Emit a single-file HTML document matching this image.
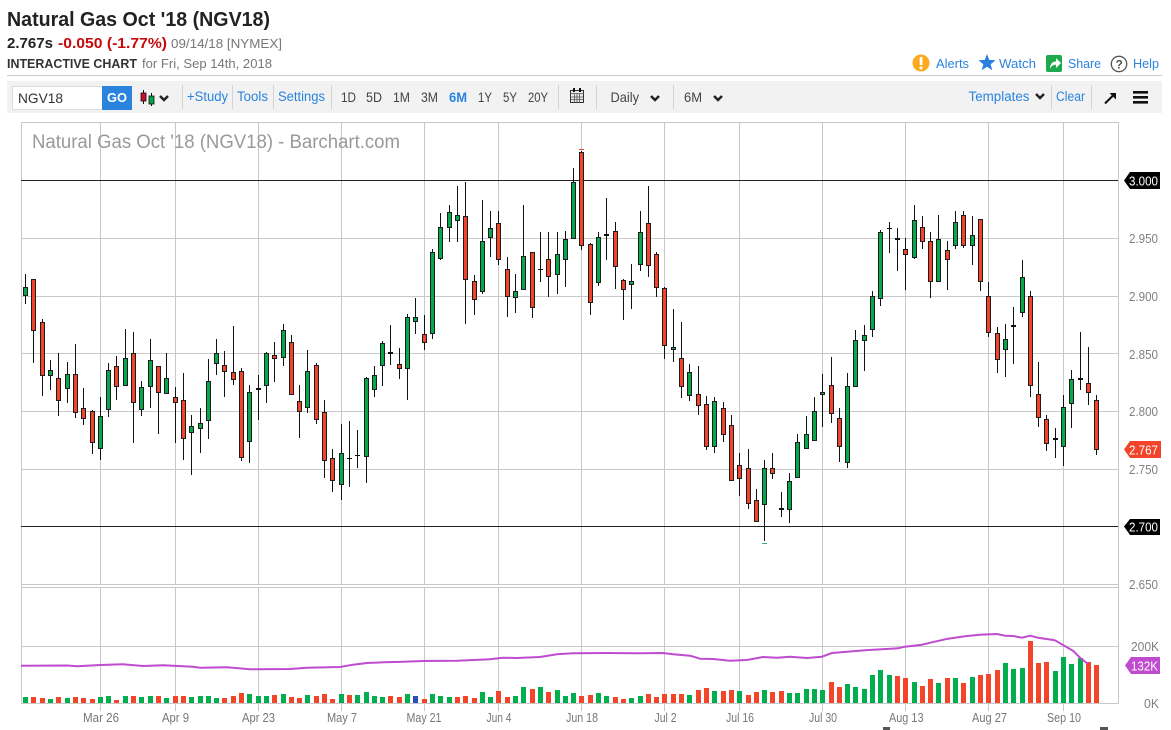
<!DOCTYPE html>
<html lang="en"><head><meta charset="utf-8"><title>Natural Gas Oct '18 (NGV18)</title>
<style>html,body{margin:0;padding:0;background:#fff;overflow:hidden}svg{display:block}text{font-family:"Liberation Sans",sans-serif}</style></head>
<body>
<svg xmlns="http://www.w3.org/2000/svg" width="1171" height="730" viewBox="0 0 1171 730">
<rect width="1171" height="730" fill="#fff"/>
<!-- header -->
<text x="7" y="26" font-size="20" font-weight="bold" fill="#222" textLength="263" lengthAdjust="spacingAndGlyphs">Natural Gas Oct '18 (NGV18)</text>
<text x="7" y="48" font-size="15" font-weight="bold" fill="#222" textLength="46" lengthAdjust="spacingAndGlyphs">2.767s</text>
<text x="58" y="48" font-size="15" font-weight="bold" fill="#c40a0a" textLength="109" lengthAdjust="spacingAndGlyphs">-0.050 (-1.77%)</text>
<text x="171" y="48" font-size="13" fill="#777" textLength="111" lengthAdjust="spacingAndGlyphs">09/14/18 [NYMEX]</text>
<text x="7" y="68" font-size="12.5" font-weight="bold" fill="#333" textLength="130" lengthAdjust="spacingAndGlyphs">INTERACTIVE CHART</text>
<text x="142" y="68" font-size="13" fill="#777" textLength="130" lengthAdjust="spacingAndGlyphs">for Fri, Sep 14th, 2018</text>
<circle cx="921" cy="63" r="8.5" fill="#fbaa1f"/><rect x="919.7" y="57" width="2.8" height="8" fill="#fff"/><rect x="919.7" y="66.5" width="2.8" height="2.8" fill="#fff"/>
<text x="936" y="68" font-size="13" fill="#2a84de" textLength="33" lengthAdjust="spacingAndGlyphs">Alerts</text>
<path d="M987 54l2.2 5.9 6.4.3-5 4 1.7 6.1-5.300-3.500-5.300 3.500 1.700-6.100-5-4 6.400-.3z" fill="#2a7de1"/>
<text x="999" y="68" font-size="13" fill="#2a84de" textLength="37" lengthAdjust="spacingAndGlyphs">Watch</text>
<rect x="1046" y="55" width="16" height="17" rx="2" fill="#1fa94e"/><path d="M1050 69c0-5 2.500-7.500 6-7.500v-3.500l5 5-5 5v-3.300c-3 0-5 1.300-6 4.300z" fill="#fff"/>
<text x="1068" y="68" font-size="13" fill="#2a84de" textLength="33" lengthAdjust="spacingAndGlyphs">Share</text>
<circle cx="1119" cy="64" r="7.700" fill="none" stroke="#555" stroke-width="1.300"/><text x="1115.500" y="68.500" font-size="12" font-weight="bold" fill="#555">?</text>
<text x="1133" y="68" font-size="13" fill="#2a84de" textLength="26" lengthAdjust="spacingAndGlyphs">Help</text>
<rect x="7" y="75" width="1155" height="1" fill="#ccc"/>
<!-- toolbar -->
<rect x="7" y="81" width="1155" height="32" fill="#f2f2f2"/>
<rect x="12.500" y="86.500" width="90" height="23" fill="#fff" stroke="#ddd"/>
<text x="18" y="103" font-size="14" fill="#333" textLength="45" lengthAdjust="spacingAndGlyphs">NGV18</text>
<rect x="102" y="86" width="30" height="24" fill="#2a84de"/>
<text x="107" y="102" font-size="12.500" font-weight="bold" fill="#fff" textLength="20" lengthAdjust="spacingAndGlyphs">GO</text>
<path d="M143.500 90V104M151.500 93V106" stroke="#111" fill="none"/>
<rect x="141" y="93" width="5" height="8" fill="#c8102e" stroke="#111" stroke-width=".8"/><rect x="149" y="96" width="5" height="8" fill="#0a9f49" stroke="#111" stroke-width=".8"/>
<g fill="none" stroke="#222" stroke-width="2.500"><path d="M160 96l4 4 4-4M651 96l4 4 4-4M714 96l4 4 4-4M1036 94l4 4 4-4"/></g>
<path d="M182.500 85V109M232.500 85V109M273.500 85V109M331.500 85V109M558.500 85V109M596.500 85V109M673.500 85V109M1051.500 85V109M1091.500 85V109" stroke="#d4d4d4" fill="none"/>
<g font-size="13.500" fill="#2a84de">
<text x="187" y="101" textLength="41" lengthAdjust="spacingAndGlyphs">+Study</text>
<text x="237" y="101" textLength="31" lengthAdjust="spacingAndGlyphs">Tools</text>
<text x="278" y="101" textLength="47" lengthAdjust="spacingAndGlyphs">Settings</text>
<text x="968.500" y="101" textLength="61" lengthAdjust="spacingAndGlyphs">Templates</text>
<text x="1056" y="101" textLength="29" lengthAdjust="spacingAndGlyphs">Clear</text>
</g>
<g font-size="14" fill="#444">
<text x="341" y="102" textLength="15" lengthAdjust="spacingAndGlyphs">1D</text>
<text x="366" y="102" textLength="16" lengthAdjust="spacingAndGlyphs">5D</text>
<text x="393" y="102" textLength="17" lengthAdjust="spacingAndGlyphs">1M</text>
<text x="421" y="102" textLength="17" lengthAdjust="spacingAndGlyphs">3M</text>
<text x="449" y="102" font-weight="bold" fill="#2a84de" textLength="18" lengthAdjust="spacingAndGlyphs">6M</text>
<text x="478" y="102" textLength="14" lengthAdjust="spacingAndGlyphs">1Y</text>
<text x="503" y="102" textLength="14" lengthAdjust="spacingAndGlyphs">5Y</text>
<text x="528" y="102" textLength="20" lengthAdjust="spacingAndGlyphs">20Y</text>
<text x="610.500" y="102" textLength="28.500" lengthAdjust="spacingAndGlyphs">Daily</text>
<text x="684" y="102" textLength="18" lengthAdjust="spacingAndGlyphs">6M</text>
</g>
<rect x="570.500" y="90.500" width="13" height="12" fill="#e8e8e8" stroke="#333"/>
<path d="M570 93.500H584M574.500 94V102M577 94V102M579.500 94V102M571 97H583M571 99.500H583" stroke="#555" stroke-width=".8" fill="none"/>
<path d="M574 88v4M580 88v4" stroke="#111" stroke-width="2"/>
<path d="M1105 103.500L1113 95.500" stroke="#111" stroke-width="2" fill="none"/><path d="M1109.500 93H1116V99.500z" fill="#111"/>
<path d="M1133 91h15v2.600h-15zM1133 96h15v2.600h-15zM1133 101h15v2.600h-15z" fill="#111"/>
<!-- chart frame & grid -->
<g fill="none" stroke="#c8c8c8" shape-rendering="crispEdges">
<path d="M21.500 122.500H1118.500V703.500H21.500z"/>
<path d="M21 238.500H1118M21 296.500H1118M21 353.500H1118M21 411.500H1118M21 469.500H1118M21 584.500H1118M21 587.500H1118M21 646.500H1118"/>
<path d="M100.500 122V585M175.500 122V585M258.500 122V585M341.500 122V585M424.500 122V585M498.500 122V585M581.500 122V585M664.500 122V585M739.500 122V585M822.500 122V585M905.500 122V585M988.500 122V585M1063.500 122V585"/>
<path d="M100.500 587V711M175.500 587V711M258.500 587V711M341.500 587V711M424.500 587V711M498.500 587V711M581.500 587V711M664.500 587V711M739.500 587V711M822.500 587V711M905.500 587V711M988.500 587V711M1063.500 587V711"/>
</g>
<text x="32" y="148" font-size="19" fill="#999" textLength="368" lengthAdjust="spacingAndGlyphs">Natural Gas Oct '18 (NGV18) - Barchart.com</text>
<path d="M21 180.500H1118M21 526.500H1118" stroke="#222" fill="none" shape-rendering="crispEdges"/>
<!-- wicks -->
<path shape-rendering="crispEdges" fill="none" stroke="#111" d="M25.500 274V304M33.500 279V363M42.500 319V396M50.500 360V390M58.500 353V416M67.500 362V403M75.500 344V418M83.500 388V425M92.500 410V454M100.500 397V460M108.500 363V417M116.500 356V400M125.500 329V385M133.500 332V443M141.500 381V416M150.500 339V408M158.500 366V434M166.500 353V393M175.500 387V443M183.500 373V460M191.500 415V475M200.500 408V453M208.500 359V439M216.500 339V375M224.500 351V397M233.500 326V385M241.500 368V461M249.500 385V463M258.500 375V420M266.500 352V403M274.500 342V382M283.500 324V366M291.500 335V394M299.500 385V438M307.500 350V413M316.500 363V424M324.500 400V478M332.500 449V492M341.500 424V500M349.500 421V487M357.500 430V468M366.500 377V483M374.500 366V397M382.500 341V386M390.500 325V365M399.500 348V379M407.500 314V400M415.500 298V334M424.500 315V350M432.500 249V339M440.500 213V260M449.500 205V242M457.500 186V242M465.500 182V324M474.500 275V315M482.500 200V294M490.500 211V257M498.500 211V265M507.500 257V317M515.500 274V313M523.500 205V290M532.500 252V318M540.500 232V282M548.500 232V297M557.500 232V294M565.500 231V287M573.500 168V238M581.500 151V250M590.500 243V315M598.500 232V286M606.500 198V260M615.500 222V289M623.500 279V320M631.500 264V309M640.500 211V271M648.500 186V277M656.500 252V297M664.500 287V359M673.500 309V362M681.500 322V398M689.500 364V401M698.500 366V415M706.500 396V450M714.500 397V453M723.500 402V442M731.500 415V480M739.500 453V496M748.500 449V509M756.500 489V521M764.500 460V541M772.500 453V479M781.500 492V517M789.500 473V523M797.500 434V478M806.500 416V448M814.500 397V440M822.500 374V427M831.500 357V423M839.500 408V462M847.500 373V468M855.500 330V386M864.500 325V371M872.500 291V337M880.500 230V306M889.500 222V253M897.500 228V271M905.500 238V290M914.500 205V259M922.500 216V249M930.500 232V298M938.500 215V281M947.500 241V290M955.500 211V249M963.500 211V248M972.500 216V265M980.500 219V291M988.500 282V337M997.500 327V373M1005.500 324V377M1013.500 307V364M1022.500 260V317M1030.500 291V397M1038.500 362V427M1046.500 415V451M1055.500 428V458M1063.500 395V466M1071.500 370V428M1080.500 332V390M1088.500 347V405M1096.500 395V455"/>
<!-- green bodies -->
<path shape-rendering="crispEdges" fill="#06a84c" stroke="#1c1c1c" d="M23.500 287.500h4V295.500h-4zM48.500 370.500h4V375.500h-4zM65.500 374.500h4V388.500h-4zM98.500 416.500h4V448.500h-4zM106.500 370.500h4V409.500h-4zM123.500 358.500h4V385.500h-4zM139.500 387.500h4V409.500h-4zM148.500 360.500h4V386.500h-4zM164.500 378.500h4V393.500h-4zM189.500 426.500h4V432.500h-4zM198.500 423.500h4V428.500h-4zM206.500 381.500h4V420.500h-4zM214.500 353.500h4V363.500h-4zM247.500 392.500h4V441.500h-4zM264.500 353.500h4V385.500h-4zM281.500 330.500h4V357.500h-4zM305.500 371.500h4V407.500h-4zM339.500 453.500h4V484.500h-4zM364.500 378.500h4V456.500h-4zM372.500 375.500h4V389.500h-4zM380.500 343.500h4V365.500h-4zM405.500 317.500h4V368.500h-4zM413.500 317.500h4V321.500h-4zM430.500 252.500h4V333.500h-4zM438.500 227.500h4V258.500h-4zM447.500 212.500h4V227.500h-4zM455.500 215.500h4V220.500h-4zM480.500 241.500h4V291.500h-4zM488.500 228.500h4V237.500h-4zM513.500 291.500h4V297.500h-4zM521.500 256.500h4V289.500h-4zM555.500 254.500h4V274.500h-4zM563.500 239.500h4V259.500h-4zM571.500 182.500h4V238.500h-4zM596.500 237.500h4V282.500h-4zM629.500 281.500h4V284.500h-4zM638.500 232.500h4V264.500h-4zM671.500 347.500h4V349.500h-4zM687.500 372.500h4V395.500h-4zM712.500 401.500h4V446.500h-4zM762.500 468.500h4V504.500h-4zM787.500 481.500h4V509.500h-4zM795.500 442.500h4V477.500h-4zM804.500 434.500h4V448.500h-4zM812.500 411.500h4V440.500h-4zM820.500 392.500h4V394.500h-4zM845.500 386.500h4V462.500h-4zM853.500 340.500h4V386.500h-4zM862.500 335.500h4V340.500h-4zM870.500 296.500h4V329.500h-4zM878.500 232.500h4V298.500h-4zM912.500 220.500h4V257.500h-4zM936.500 239.500h4V281.500h-4zM953.500 222.500h4V245.500h-4zM970.500 235.500h4V245.500h-4zM1003.500 339.500h4V349.500h-4zM1020.500 277.500h4V312.500h-4zM1061.500 407.500h4V446.500h-4zM1069.500 379.500h4V403.500h-4z"/>
<!-- red bodies -->
<path shape-rendering="crispEdges" fill="#f1442a" stroke="#1c1c1c" d="M31.500 279.500h4V330.500h-4zM40.500 322.500h4V375.500h-4zM56.500 378.500h4V400.500h-4zM73.500 374.500h4V412.500h-4zM81.500 408.500h4V418.500h-4zM90.500 411.500h4V442.500h-4zM114.500 366.500h4V386.500h-4zM131.500 353.500h4V402.500h-4zM156.500 366.500h4V392.500h-4zM173.500 397.500h4V402.500h-4zM181.500 400.500h4V438.500h-4zM222.500 365.500h4V371.500h-4zM231.500 372.500h4V379.500h-4zM239.500 371.500h4V457.500h-4zM272.500 355.500h4V358.500h-4zM289.500 342.500h4V394.500h-4zM297.500 401.500h4V411.500h-4zM314.500 365.500h4V419.500h-4zM322.500 412.500h4V460.500h-4zM330.500 458.500h4V480.500h-4zM397.500 364.500h4V368.500h-4zM422.500 334.500h4V342.500h-4zM463.500 216.500h4V279.500h-4zM472.500 281.500h4V299.500h-4zM496.500 223.500h4V259.500h-4zM505.500 269.500h4V296.500h-4zM530.500 252.500h4V307.500h-4zM546.500 259.500h4V276.500h-4zM579.500 152.500h4V245.500h-4zM588.500 244.500h4V302.500h-4zM613.500 231.500h4V266.500h-4zM621.500 280.500h4V289.500h-4zM646.500 223.500h4V265.500h-4zM654.500 254.500h4V287.500h-4zM662.500 288.500h4V345.500h-4zM679.500 358.500h4V386.500h-4zM696.500 394.500h4V405.500h-4zM704.500 404.500h4V446.500h-4zM721.500 408.500h4V434.500h-4zM729.500 425.500h4V480.500h-4zM737.500 465.500h4V478.500h-4zM746.500 468.500h4V503.500h-4zM754.500 500.500h4V521.500h-4zM770.500 468.500h4V473.500h-4zM829.500 385.500h4V413.500h-4zM837.500 418.500h4V446.500h-4zM903.500 249.500h4V254.500h-4zM920.500 227.500h4V241.500h-4zM928.500 241.500h4V281.500h-4zM945.500 250.500h4V259.500h-4zM961.500 215.500h4V245.500h-4zM978.500 219.500h4V281.500h-4zM986.500 296.500h4V332.500h-4zM995.500 333.500h4V359.500h-4zM1028.500 296.500h4V385.500h-4zM1036.500 394.500h4V417.500h-4zM1044.500 419.500h4V443.500h-4zM1086.500 383.500h4V392.500h-4zM1094.500 400.500h4V449.500h-4z"/>
<!-- dojis -->
<path shape-rendering="crispEdges" fill="none" stroke="#111" stroke-width="2" d="M256 389h5M388 353h5M604 235h5M779 509h5M895 239h5M1011 326h5M1053 439h5M1078 379h5"/>
<path shape-rendering="crispEdges" fill="none" stroke="#111" d="M347 458.500h5M355 455.500h5M538 269.500h5M887 228.500h5"/>
<path d="M579 149.500h5" stroke="#f1442a" shape-rendering="crispEdges"/><path d="M762 543.500h5" stroke="#2cb46a" shape-rendering="crispEdges"/>
<!-- volume -->
<path shape-rendering="crispEdges" fill="none" stroke="#00ae4e" stroke-width="5" d="M25.500 703V697M50.500 703V699M67.500 703V698M100.500 703V697M108.500 703V696M125.500 703V696M141.500 703V697M150.500 703V696M166.500 703V698M191.500 703V697M200.500 703V696M208.500 703V696M216.500 703V698M249.500 703V694M258.500 703V696M266.500 703V696M283.500 703V694M307.500 703V695M341.500 703V694M357.500 703V695M366.500 703V692M374.500 703V696M382.500 703V697M407.500 703V694M432.500 703V694M440.500 703V696M449.500 703V697M482.500 703V692M490.500 703V697M515.500 703V696M523.500 703V687M540.500 703V687M557.500 703V690M565.500 703V696M573.500 703V693M598.500 703V693M606.500 703V696M631.500 703V698M640.500 703V696M689.500 703V695M714.500 703V691M739.500 703V691M764.500 703V690M789.500 703V693M797.500 703V693M806.500 703V689M814.500 703V689M822.500 703V690M847.500 703V684M855.500 703V687M864.500 703V689M872.500 703V675M880.500 703V670M889.500 703V675M914.500 703V682M938.500 703V683M955.500 703V678M972.500 703V677M1005.500 703V663M1013.500 703V669M1022.500 703V668M1055.500 703V671M1063.500 703V657M1071.500 703V664M1080.500 703V658"/>
<path shape-rendering="crispEdges" fill="none" stroke="#f2452a" stroke-width="5" d="M33.500 703V697M42.500 703V698M58.500 703V697M75.500 703V697M83.500 703V698M92.500 703V699M116.500 703V700M133.500 703V696M158.500 703V696M175.500 703V696M183.500 703V696M224.500 703V698M233.500 703V696M241.500 703V693M274.500 703V695M291.500 703V697M299.500 703V698M316.500 703V696M324.500 703V694M332.500 703V699M349.500 703V695M390.500 703V696M399.500 703V697M424.500 703V699M457.500 703V697M465.500 703V696M474.500 703V698M498.500 703V691M507.500 703V697M532.500 703V689M548.500 703V692M581.500 703V696M590.500 703V695M615.500 703V697M623.500 703V699M648.500 703V694M656.500 703V697M664.500 703V694M673.500 703V694M681.500 703V694M698.500 703V690M706.500 703V688M723.500 703V691M731.500 703V690M748.500 703V695M756.500 703V692M772.500 703V692M781.500 703V691M831.500 703V682M839.500 703V687M897.500 703V676M905.500 703V678M922.500 703V686M930.500 703V679M947.500 703V678M963.500 703V683M980.500 703V675M988.500 703V674M997.500 703V670M1030.500 703V641M1038.500 703V663M1046.500 703V662M1088.500 703V662M1096.500 703V665"/>
<path shape-rendering="crispEdges" d="M415.500 703V696" stroke="#2b4fb5" stroke-width="5" fill="none"/>
<polyline fill="none" stroke="#bf4ccf" stroke-width="2" stroke-linejoin="round" points="21,665.700 67,665.500 77,666.300 100,665 123,664.300 143,666 163,665.300 193,666.700 200,667.700 227,667.300 250,669.300 290,669 307,667.700 340,667 353,664.700 367,663 383,662.300 400,661.900 423,661 457,660.700 490,659.300 503,657.700 517,658 540,657 557,654.300 573,653.300 607,653 640,653.300 663,653 673,654.300 690,655.700 700,658.700 713,659 730,660.700 747,660 763,657 777,657.700 790,656.700 807,658 822,656.700 832,653 865,650.300 898,648.300 905,646.700 922,644.700 932,642.300 948,638.700 965,636.300 980,634.700 997,634 1005,635.700 1013,636 1022,637.700 1030,635.700 1038,637.700 1055,640.300 1063,645 1073,650.700 1080,657.700 1088,664"/>
<!-- axis labels -->
<g font-size="13" fill="#808080">
<text x="1129" y="243" textLength="29" lengthAdjust="spacingAndGlyphs">2.950</text>
<text x="1129" y="301" textLength="29" lengthAdjust="spacingAndGlyphs">2.900</text>
<text x="1129" y="359" textLength="29" lengthAdjust="spacingAndGlyphs">2.850</text>
<text x="1129" y="416" textLength="29" lengthAdjust="spacingAndGlyphs">2.800</text>
<text x="1129" y="474" textLength="29" lengthAdjust="spacingAndGlyphs">2.750</text>
<text x="1129" y="589" textLength="29" lengthAdjust="spacingAndGlyphs">2.650</text>
<text x="1131" y="651" textLength="28" lengthAdjust="spacingAndGlyphs">200K</text>
<text x="1144" y="708" textLength="15" lengthAdjust="spacingAndGlyphs">0K</text>
</g>
<path d="M1124 180.500L1130 172H1160V189H1130z" fill="#000"/><text x="1129" y="185.500" font-size="13" fill="#fff" textLength="29" lengthAdjust="spacingAndGlyphs">3.000</text>
<path d="M1124 526.500L1130 519H1160V535H1130z" fill="#000"/><text x="1129" y="531.500" font-size="13" fill="#fff" textLength="29" lengthAdjust="spacingAndGlyphs">2.700</text>
<path d="M1124 449.500L1130 441H1161V458H1130z" fill="#f1442a"/><text x="1129" y="454.500" font-size="13" fill="#fff" textLength="29" lengthAdjust="spacingAndGlyphs">2.767</text>
<path d="M1125 665.500L1131 657H1160V674H1131z" fill="#bf4ccf"/><text x="1131" y="670.500" font-size="13" fill="#fff" textLength="27" lengthAdjust="spacingAndGlyphs">132K</text>
<g font-size="12.500" fill="#777">
<text x="83" y="722" textLength="36" lengthAdjust="spacingAndGlyphs">Mar 26</text>
<text x="162" y="722" textLength="27" lengthAdjust="spacingAndGlyphs">Apr 9</text>
<text x="242" y="722" textLength="33" lengthAdjust="spacingAndGlyphs">Apr 23</text>
<text x="327" y="722" textLength="30" lengthAdjust="spacingAndGlyphs">May 7</text>
<text x="406.500" y="722" textLength="35" lengthAdjust="spacingAndGlyphs">May 21</text>
<text x="486.500" y="722" textLength="25" lengthAdjust="spacingAndGlyphs">Jun 4</text>
<text x="566" y="722" textLength="32" lengthAdjust="spacingAndGlyphs">Jun 18</text>
<text x="654.500" y="722" textLength="22" lengthAdjust="spacingAndGlyphs">Jul 2</text>
<text x="726" y="722" textLength="28" lengthAdjust="spacingAndGlyphs">Jul 16</text>
<text x="809" y="722" textLength="28" lengthAdjust="spacingAndGlyphs">Jul 30</text>
<text x="889" y="722" textLength="34.500" lengthAdjust="spacingAndGlyphs">Aug 13</text>
<text x="972" y="722" textLength="35" lengthAdjust="spacingAndGlyphs">Aug 27</text>
<text x="1047" y="722" textLength="34" lengthAdjust="spacingAndGlyphs">Sep 10</text>
</g>
<rect x="883" y="727" width="7" height="3" fill="#555"/><rect x="1100" y="727" width="8" height="3" fill="#555"/>
</svg>
</body></html>
